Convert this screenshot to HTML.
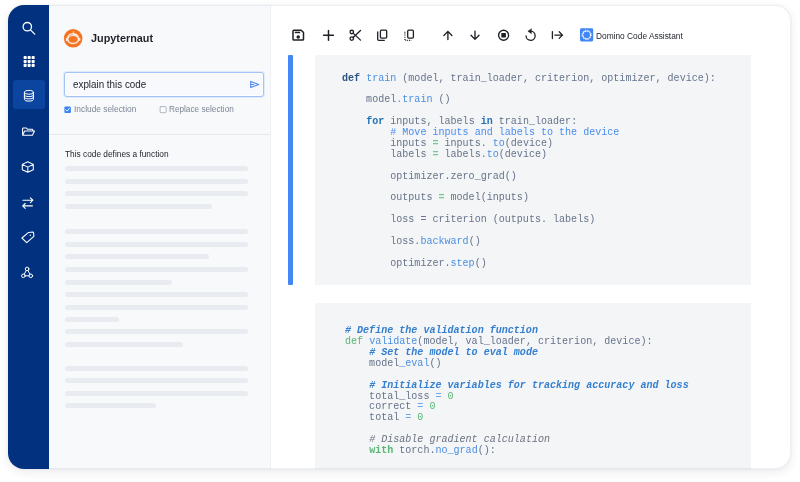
<!DOCTYPE html>
<html>
<head>
<meta charset="utf-8">
<title>Jupyternaut</title>
<style>
html,body{margin:0;padding:0;}
body{width:800px;height:482px;background:#fff;position:relative;overflow:hidden;font-family:"Liberation Sans",sans-serif;}
#card{position:absolute;left:8.3px;top:5px;width:782.7px;height:464.1px;border-radius:16px;background:#fff;box-shadow:0 3px 10px rgba(40,50,80,0.10),0 0 1px rgba(40,50,80,0.25);overflow:hidden;}
#in{position:absolute;left:-0.3px;top:0;width:783px;height:464px;will-change:transform;}
#edge{position:absolute;left:0;top:0;right:0;bottom:0;border-radius:16px;box-shadow:inset 0 0 0 1px rgba(20,30,50,0.065);pointer-events:none;}
#side{position:absolute;left:0;top:0;width:40.5px;height:100%;background:#02317f;}
#side .act{position:absolute;left:4.6px;top:74.7px;width:32.7px;height:29.4px;border-radius:3px;background:#0b459f;}
#side svg{position:absolute;}
#panel{position:absolute;left:40.5px;top:0;width:221px;height:100%;background:#f8f9fb;border-right:1px solid #eef0f3;}
#main{position:absolute;left:262.5px;top:0;right:0;height:100%;background:#fff;}
.abs{position:absolute;}
.title{left:82.8px;top:27.2px;font-weight:bold;font-size:10.5px;color:#1f2229;}
.sx{display:inline-block;transform-origin:0 50%;white-space:nowrap;}
.inp{left:56.2px;top:67px;width:199.6px;height:24.9px;border:1px solid #a3c2f5;border-radius:3px;background:#f8f9fc;box-sizing:border-box;box-shadow:0 0 0 1px rgba(66,133,244,0.12),inset 0 0 0 1px rgba(255,255,255,0.9);}
.inp span{position:absolute;left:7.6px;top:5.2px;font-size:10.8px;color:#22262e;}
.cb{font-size:9.4px;color:#7c8594;}
.hr{left:40.5px;top:129px;width:221px;height:1px;background:#e6e8ec;}
.bar{position:absolute;left:56.5px;height:5px;border-radius:3px;background:#e8ebf0;}
.cell{position:absolute;background:#f4f5f7;}
pre{margin:0;position:absolute;font-family:"Liberation Mono",monospace;font-size:10.05px;line-height:10.9px;color:#66738a;}
.k{color:#2c5585;font-weight:bold;}
.f{color:#4a8fe0;}
.c{color:#4a8cf0;}
.g{color:#74c892;font-weight:bold;}
.k2{color:#2170b4;font-weight:bold;}
.cb2{color:#347fcf;font-style:italic;font-weight:bold;}
.cg{color:#6b7280;font-style:italic;}
.kg{color:#58b574;}
.lb{color:#6aa5ee;}
</style>
</head>
<body>
<div id="card"><div id="in">
  <div id="main">
    <div class="cell" style="left:17px;top:50px;width:5.5px;height:230px;background:#4587f7;border-radius:1px;"></div>
    <div class="cell" style="left:44.5px;top:50px;width:436px;height:230px;">
<pre style="left:27px;top:18.5px;"><span class="k">def</span> <span class="f">train</span> (model, train_loader, criterion, optimizer, device):

    model<span class="f">.train</span> ()

    <span class="k2">for</span> inputs, labels <span class="k2">in</span> train_loader:
        <span class="c"># Move inputs and labels to the device</span>
        inputs <span class="g">=</span> inputs. <span class="f">to</span>(device)
        labels <span class="g">=</span> labels.<span class="f">to</span>(device)

        optimizer.zero_grad()

        outputs <span class="g">=</span> model(inputs)

        loss = criterion (outputs. labels)

        loss.<span class="f">backward</span>()

        optimizer.<span class="f">step</span>()</pre>
    </div>
    <div class="cell" style="left:44.5px;top:298px;width:436px;height:170px;">
<pre style="left:30px;top:23.1px;"><span class="cb2"># Define the validation function</span>
<span class="kg">def</span> <span class="f">validate</span>(model, val_loader, criterion, device):
    <span class="cb2"># Set the model to eval mode</span>
    model<span class="f">_eval</span>()

    <span class="cb2"># Initialize variables for tracking accuracy and loss</span>
    total_loss <span class="lb">=</span> <span class="kg">0</span>
    correct <span class="lb">=</span> <span class="kg">0</span>
    total <span class="lb">=</span> <span class="kg">0</span>

    <span class="cg"># Disable gradient calculation</span>
    <span class="kg"><b>with</b></span> torch.<span class="f">no_grad</span>():</pre>
    </div>
    <div class="abs" style="left:325.9px;top:24.5px;font-size:9.6px;color:#23272e;"><span class="sx" id="t6" style="transform:scaleX(0.87)">Domino Code Assistant</span></div>
  </div>
  <div id="panel"></div>
  <div class="abs title"><span class="sx" id="t1" style="transform:scaleX(1.032)">Jupyternaut</span></div>
  <div class="abs inp"><span class="sx" id="t2" style="transform:scaleX(0.91)">explain this code</span></div>
  <div class="abs cb" style="left:65.6px;top:98.2px;"><span class="sx" id="t3" style="transform:scaleX(0.892)">Include selection</span></div>
  <div class="abs cb" style="left:161.2px;top:98.2px;"><span class="sx" id="t4" style="transform:scaleX(0.875)">Replace selection</span></div>
  <div class="abs hr"></div>
  <div class="abs" style="left:56.5px;top:143.5px;font-size:9px;color:#22262e;"><span class="sx" id="t5" style="transform:scaleX(0.924)">This code defines a function</span></div>
  <div id="bars">
  <div class="bar" style="top:161.25px;width:183.0px;"></div>
  <div class="bar" style="top:173.75px;width:183.0px;"></div>
  <div class="bar" style="top:186.25px;width:183.0px;"></div>
  <div class="bar" style="top:198.75px;width:147.5px;"></div>
  <div class="bar" style="top:224.30px;width:183.0px;"></div>
  <div class="bar" style="top:236.80px;width:183.0px;"></div>
  <div class="bar" style="top:249.30px;width:144.1px;"></div>
  <div class="bar" style="top:261.80px;width:183.0px;"></div>
  <div class="bar" style="top:274.80px;width:107.2px;"></div>
  <div class="bar" style="top:287.30px;width:183.0px;"></div>
  <div class="bar" style="top:299.80px;width:183.0px;"></div>
  <div class="bar" style="top:312.30px;width:54.9px;"></div>
  <div class="bar" style="top:324.30px;width:183.0px;"></div>
  <div class="bar" style="top:336.80px;width:118.5px;"></div>
  <div class="bar" style="top:360.70px;width:183.0px;"></div>
  <div class="bar" style="top:373.20px;width:183.0px;"></div>
  <div class="bar" style="top:385.70px;width:183.0px;"></div>
  <div class="bar" style="top:398.20px;width:91.8px;"></div>
  </div>
  <div id="edge" style="left:0.3px"></div>
  <div id="side"><div class="act"></div></div>
<svg class="abs" style="left:0;top:0;" width="783" height="464" viewBox="8 5 783 464" fill="none" stroke-linecap="round" stroke-linejoin="round">
  <!-- sidebar icons -->
  <g stroke="#fff" stroke-width="1.15">
    <circle cx="27.3" cy="26.7" r="4.2" stroke-width="1.3"/>
    <path d="M30.5 29.9 L34.7 34.1" stroke-width="1.3"/>
    <g fill="#fff" stroke="none">
      <rect x="23.6" y="56" width="3.1" height="3.1" rx="0.9"/><rect x="27.6" y="56" width="3.1" height="3.1" rx="0.9"/><rect x="31.6" y="56" width="3.1" height="3.1" rx="0.9"/>
      <rect x="23.6" y="59.9" width="3.1" height="3.1" rx="0.9"/><rect x="27.6" y="59.9" width="3.1" height="3.1" rx="0.9"/><rect x="31.6" y="59.9" width="3.1" height="3.1" rx="0.9"/>
      <rect x="23.6" y="63.8" width="3.1" height="3.1" rx="0.9"/><rect x="27.6" y="63.8" width="3.1" height="3.1" rx="0.9"/><rect x="31.6" y="63.8" width="3.1" height="3.1" rx="0.9"/>
    </g>
    <g stroke-width="1">
      <ellipse cx="28.9" cy="92.3" rx="4.5" ry="1.9"/>
      <path d="M24.4 92.3 V99.3 A4.5 1.9 0 0 0 33.4 99.3 V92.3"/>
      <path d="M24.4 94.7 A4.5 1.9 0 0 0 33.4 94.7"/>
      <path d="M24.4 97 A4.5 1.9 0 0 0 33.4 97"/>
    </g>
    <path d="M22.6 135 V128.6 Q22.6 128 23.2 128 H26.4 L27.6 129.3 H32.2 Q32.8 129.3 32.8 129.9 V130.8 M22.6 135.2 L24.7 130.9 H34.5 L32.4 135.2 Z" stroke-width="1.05"/>
    <path d="M27.8 161.7 L33.3 164.4 V169.7 L27.8 172.3 L22.3 169.7 V164.4 Z M22.3 164.4 L27.8 167.1 L33.3 164.4 M27.8 167.1 V172.3" stroke-width="1.05"/>
    <path d="M23 200.2 H32.8 M30.4 197.8 L32.9 200.2 L30.4 202.6 M32.4 205.9 H22.8 M25.2 203.5 L22.7 205.9 L25.2 208.3" stroke-width="1.15"/>
    <path d="M21.9 238 L28.6 232.4 L32.6 232.1 Q33.5 232.1 33.6 233 L33.9 236.4 L26.7 242.6 Z" stroke-width="1.05"/>
    <circle cx="30.3" cy="235.3" r="0.7" fill="#fff" stroke="none"/>
    <g stroke-width="1">
      <circle cx="27.1" cy="268.9" r="1.8"/><circle cx="23.4" cy="275.8" r="1.8"/><circle cx="30.8" cy="275.8" r="1.8"/>
      <path d="M26.3 270.4 L24.2 274.3 M27.9 270.4 L30 274.3 M25.1 275.8 H29.1"/>
    </g>
  </g>
  <!-- jupyternaut logo -->
  <circle cx="73.15" cy="38.3" r="9.3" fill="#f37524"/>
  <g fill="#fff" fill-opacity="0.82" stroke="none">
    <path d="M73.1 33.1 C77 33.1 79.3 36 79.3 39.1 C79.3 42.2 76.6 44.3 73.1 44.3 C69.6 44.3 66.9 42.2 66.9 39.1 C66.9 36 69.2 33.1 73.1 33.1 Z M73.1 35.9 C70.3 35.9 68.5 37.4 68.5 39.3 C68.5 41.2 70.4 42.8 73.1 42.8 C75.8 42.8 77.7 41.2 77.7 39.3 C77.7 37.4 75.9 35.9 73.1 35.9 Z" fill-rule="evenodd"/>
    <rect x="65.9" y="37.7" width="1.6" height="3.4" rx="0.8"/>
    <rect x="78.7" y="37.7" width="1.6" height="3.4" rx="0.8"/>
    <rect x="72.85" y="31.2" width="0.9" height="2.4" rx="0.4"/>
  </g>
  <path d="M69.3 36.1 Q70.6 34.9 72.3 34.6" stroke="#f37524" stroke-width="0.55" fill="none"/>
  <!-- send icon -->
  <path d="M250.7 81.4 L258.7 84.5 L250.7 87.6 Z M250.7 84.5 H253.8" stroke="#4a86f0" stroke-width="1.1"/>
  <!-- checkboxes -->
  <rect x="64.4" y="106.4" width="6.5" height="6.5" rx="1" fill="#3b82f6"/>
  <path d="M65.9 109.8 L67.2 111.1 L69.5 108.2" stroke="#fff" stroke-width="0.9"/>
  <rect x="160.1" y="106.6" width="6.1" height="6.1" rx="0.9" stroke="#9aa1ad" stroke-width="0.75" fill="#fbfcfd"/>
  <!-- toolbar icons -->
  <g stroke="#1d2025" stroke-width="1.4">
    <path d="M293.9 30.2 H301.2 L303.5 32.5 V39.2 Q303.5 40.1 302.6 40.1 H293.9 Q293 40.1 293 39.2 V31.1 Q293 30.2 293.9 30.2 Z" stroke-width="1.5"/>
    <rect x="294.8" y="31.7" width="5.4" height="1.5" fill="#1d2025" stroke="none"/>
    <circle cx="298.2" cy="37.1" r="1.75" fill="#1d2025" stroke="none"/>
    <path d="M328.5 30.5 V40.2 M323.6 35.35 H333.4" stroke-width="1.5"/>
    <g stroke-width="1.3">
      <circle cx="351.8" cy="32" r="1.75"/><circle cx="351.8" cy="38.6" r="1.75"/>
      <path d="M353.1 33.1 L360.5 40.1 M353.1 37.5 L360.5 30.5"/>
    </g>
    <g stroke-width="1.3">
      <rect x="380.4" y="30.1" width="6.3" height="8" rx="1.1"/>
      <path d="M377.7 32 V39.2 Q377.7 40.3 378.8 40.3 H384.3"/>
      <rect x="407.7" y="30.1" width="5.7" height="8" rx="1.1"/>
      <path d="M404.9 31.8 V40.3 H411.2" stroke-dasharray="0.9 0.9" stroke-linecap="butt" stroke-width="1.2"/>
    </g>
    <path d="M447.9 39.6 V31.5 M443.9 35.5 L447.9 31.4 L451.9 35.5" stroke-width="1.35"/>
    <path d="M475 31.2 V39.3 M471 35.3 L475 39.4 L479 35.3" stroke-width="1.35"/>
    <circle cx="503.6" cy="35.2" r="5" stroke-width="1.35"/>
    <rect x="501.3" y="32.9" width="4.6" height="4.6" rx="0.4" fill="#1d2025" stroke="none"/>
    <path d="M530.6 31.2 A4.55 4.55 0 1 1 526.05 35.8" stroke-width="1.3"/><path d="M531.2 28.9 L527.9 31.2 L531.2 33.5 Z" fill="#1d2025" stroke-width="0.5"/>
    <path d="M552.4 31.6 V38.6 M554.8 35.1 H562.3 M559.2 31.8 L562.5 35.1 L559.2 38.4" stroke-width="1.3"/>
  </g>
  <!-- domino icon -->
  <rect x="580" y="28.3" width="13.2" height="13.2" rx="1.4" fill="#4285f4"/>
  <circle cx="586.6" cy="34.9" r="3.9" stroke="#fff" stroke-width="0.95"/>
  <circle cx="586.6" cy="34.9" r="4.7" stroke="#fff" stroke-width="0.9" stroke-dasharray="1.23 1.23" stroke-linecap="butt"/>
</svg>
</div></div>
</body>
</html>
